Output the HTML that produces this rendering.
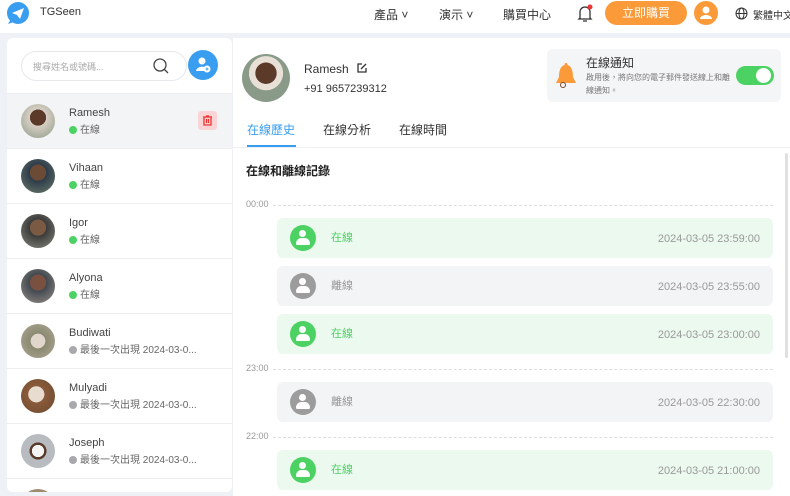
<!DOCTYPE html><html><head><meta charset="utf-8"><style>
*{box-sizing:border-box;margin:0;padding:0}
html,body{overflow:hidden}
body{width:790px;height:496px;background:#eef1f5;font-family:"Liberation Sans","Noto Sans CJK TC",sans-serif;position:relative;color:#333}
.a{position:absolute}
.hdr{left:0;top:0;width:790px;height:33px;background:#fff}
.nav{font-size:12px;color:#333;top:6px}
.side{left:7px;top:38px;width:225px;height:454px;background:#fff;border-radius:6px;overflow:hidden}
.main{left:233px;top:38px;width:557px;height:458px;background:#fff;overflow:hidden}
.row{position:absolute;left:0;width:225px;height:55px;border-top:1px solid #eceef1}
.av{position:absolute;width:34px;height:34px;border-radius:50%;left:14px;top:10px}
.nm{position:absolute;left:62px;top:13px;font-size:11px;color:#444}
.st{position:absolute;left:62px;top:27px;font-size:10px;color:#666;white-space:nowrap}
.dot{display:inline-block;width:8px;height:8px;border-radius:50%;margin-right:3px;vertical-align:-1px}
.card{position:absolute;left:44px;width:496px;height:40px;border-radius:6px}
.ic{position:absolute;left:13px;top:7px;width:26px;height:26px;border-radius:50%}
.ct{position:absolute;left:54px;top:0;line-height:40px;font-size:11px}
.dt{position:absolute;right:13px;top:1px;line-height:40px;font-size:11px;color:#999}
.tl{position:absolute;left:13px;font-size:9px;color:#999}
.dash{position:absolute;left:40px;width:500px;border-top:1px dashed #ddd}
.ic::after{content:"";position:absolute;left:9px;top:5px;width:7px;height:7px;border-radius:50%;background:#fff}
.ic::before{content:"";position:absolute;left:6px;top:13px;width:14px;height:7px;border-radius:7px 7px 2px 2px;background:#fff}
</style></head><body>
<div class="a hdr"></div>
<svg class="a" style="left:6px;top:2px" width="24" height="24" viewBox="0 0 24 24"><circle cx="12" cy="11" r="11" fill="#3a9ef0"/><path d="M2 22 L5 17 L8 20Z" fill="#3a9ef0"/><path d="M6 11 L18 6 L14 17 L11 13Z" fill="#fff"/></svg>
<div class="a" style="left:40px;top:6px;font-size:11px;color:#333">TGSeen</div>
<div class="a nav" style="left:374px">產品 ˅</div>
<div class="a nav" style="left:439px">演示 ˅</div>
<div class="a nav" style="left:503px">購買中心</div>
<svg class="a" style="left:576px;top:4px" width="18" height="20" viewBox="0 0 18 20"><path d="M4 14 V8 a5 5 0 0 1 10 0 V14 L15 15 H3Z M7 17 h4" fill="none" stroke="#333" stroke-width="1.3"/><circle cx="14" cy="3" r="2.5" fill="#e33"/></svg>
<div class="a" style="left:605px;top:1px;width:82px;height:24px;border-radius:12px;background:#fb9a38;color:#fff;font-size:12px;text-align:center;line-height:24px">立即購買</div>
<div class="a" style="left:694px;top:1px;width:24px;height:24px;border-radius:50%;background:#fb9a38"><svg width="24" height="24"><circle cx="12" cy="9" r="3.5" fill="#fff"/><path d="M6 18 a6 4 0 0 1 12 0Z" fill="#fff"/></svg></div>
<svg class="a" style="left:735px;top:7px" width="13" height="13" viewBox="0 0 13 13" fill="none" stroke="#333" stroke-width="1"><circle cx="6.5" cy="6.5" r="5.5"/><ellipse cx="6.5" cy="6.5" rx="2.5" ry="5.5"/><path d="M1 6.5h11"/></svg>
<div class="a" style="left:753px;top:7px;font-size:10px;white-space:nowrap">繁體中文</div>

<div class="a side">
 <div class="a" style="left:14px;top:13px;width:166px;height:30px;border:1px solid #e6e8eb;border-radius:15px;font-size:9px;color:#aaa;padding:8px 11px">搜尋姓名或號碼...</div>
 <svg class="a" style="left:145px;top:19px" width="18" height="18"><circle cx="8" cy="8" r="6" fill="none" stroke="#444" stroke-width="1.3"/><path d="M12.5 12.5 L16 16" stroke="#444" stroke-width="1.3"/></svg>
 <div class="a" style="left:181px;top:12px;width:30px;height:30px;border-radius:50%;background:#3a9ef0"><svg width="30" height="30"><circle cx="14" cy="11" r="3.5" fill="#fff"/><path d="M8 21 a6 5 0 0 1 10 -3 v3Z" fill="#fff"/><circle cx="19" cy="19" r="3.5" fill="#fff"/><path d="M17.5 19h3M19 17.5v3" stroke="#3a9ef0"/></svg></div>
 <div class="row" style="top:55px;background:#f3f4f6"><div class="av" style="background:radial-gradient(circle at 50% 40%,#5b3a2a 0 30%,#d9cfc4 31%,#8a9a88)"></div><div class="nm">Ramesh</div><div class="st"><span class="dot" style="background:#4cd263"></span>在線</div>
  <div class="a" style="left:191px;top:17px;width:19px;height:19px;background:#fbd5d5;border-radius:3px"><svg width="19" height="19"><path d="M5 6h9M8 5h3M6 6v8h7V6M8.5 8v4M10.5 8v4" fill="none" stroke="#e33" stroke-width="1.3"/></svg></div></div>
 <div class="row" style="top:110px"><div class="av" style="background:radial-gradient(circle at 50% 40%,#6b4a36 0 30%,#2d3b4a 31%,#6b7c6a)"></div><div class="nm">Vihaan</div><div class="st"><span class="dot" style="background:#4cd263"></span>在線</div></div>
 <div class="row" style="top:165px"><div class="av" style="background:radial-gradient(circle at 50% 40%,#7b5a44 0 30%,#3a3a3a 31%,#8a8a80)"></div><div class="nm">Igor</div><div class="st"><span class="dot" style="background:#4cd263"></span>在線</div></div>
 <div class="row" style="top:220px"><div class="av" style="background:radial-gradient(circle at 50% 40%,#7a5040 0 30%,#404850 31%,#9a9088)"></div><div class="nm">Alyona</div><div class="st"><span class="dot" style="background:#4cd263"></span>在線</div></div>
 <div class="row" style="top:275px"><div class="av" style="background:radial-gradient(circle at 50% 50%,#e0d6cc 0 30%,#8a8a70 31%,#b0a898)"></div><div class="nm">Budiwati</div><div class="st"><span class="dot" style="background:#a8a8ad"></span>最後一次出現 2024-03-0...</div></div>
 <div class="row" style="top:330px"><div class="av" style="background:radial-gradient(circle at 45% 45%,#e8dcd0 0 30%,#8a5a3a 31%,#6a4a30)"></div><div class="nm">Mulyadi</div><div class="st"><span class="dot" style="background:#a8a8ad"></span>最後一次出現 2024-03-0...</div></div>
 <div class="row" style="top:385px"><div class="av" style="background:radial-gradient(circle at 50% 50%,#f4f4f4 0 25%,#5a3a2a 26% 35%,#b8bcc0 36%)"></div><div class="nm">Joseph</div><div class="st"><span class="dot" style="background:#a8a8ad"></span>最後一次出現 2024-03-0...</div></div>
 <div class="row" style="top:440px"><div class="av" style="background:#a08a70"></div></div>
</div>

<div class="a main">
 <div class="a" style="left:9px;top:16px;width:48px;height:48px;border-radius:50%;background:radial-gradient(circle at 50% 40%,#5b3a2a 0 28%,#e8e0d6 29% 45%,#8a9a88 46%)"></div>
 <div class="a" style="left:71px;top:24px;font-size:12px;color:#333">Ramesh <svg width="12" height="12" style="vertical-align:-1px;margin-left:4px"><path d="M6 2H2v8h8V6M5 7l5-5" fill="none" stroke="#333" stroke-width="1.3"/></svg></div>
 <div class="a" style="left:71px;top:45px;font-size:11px;color:#333">+91 9657239312</div>
 <div class="a" style="left:314px;top:11px;width:234px;height:53px;background:#f4f5f7;border-radius:6px">
  <svg class="a" style="left:7px;top:13px" width="24" height="28" viewBox="0 0 24 28"><path d="M12 3 C6 3 5 10 5 15 L2 21 H22 L19 15 C19 10 18 3 12 3Z" fill="#fb9a38"/><circle cx="12" cy="2.5" r="1.5" fill="#fb9a38"/><circle cx="9" cy="23" r="2.5" fill="none" stroke="#7a4a2a"/></svg>
  <div class="a" style="left:39px;top:5px;font-size:12px;color:#333">在線通知</div>
  <div class="a" style="left:39px;top:22px;font-size:8px;color:#777;width:150px;line-height:13px">啟用後，將向您的電子郵件發送線上和離線通知。</div>
  <div class="a" style="left:189px;top:17px;width:38px;height:19px;border-radius:10px;background:#4cd263"><div class="a" style="left:20px;top:2px;width:15px;height:15px;border-radius:50%;background:#fff"></div></div>
 </div>
 <div class="a" style="left:14px;top:83px;font-size:12px;color:#3a9ef0">在線歷史</div>
 <div class="a" style="left:90px;top:83px;font-size:12px;color:#333">在線分析</div>
 <div class="a" style="left:166px;top:83px;font-size:12px;color:#333">在線時間</div>
 <div class="a" style="left:14px;top:107px;width:49px;height:2px;background:#3a9ef0"></div>
 <div class="a" style="left:0;top:109px;width:557px;height:1px;background:#eceef1"></div>
 <div class="a" style="left:552px;top:115px;width:3px;height:205px;background:#e0e0e0;border-radius:2px"></div>
 <div class="a" style="left:13px;top:124px;font-size:12px;font-weight:bold;color:#222">在線和離線記錄</div>
 <div class="tl" style="top:161px">00:00</div><div class="dash" style="top:167px"></div>
 <div class="card" style="top:180px;background:#ebf9ee"><div class="ic" style="background:#4cd263"></div><div class="ct" style="color:#4cd263">在線</div><div class="dt">2024-03-05 23:59:00</div></div>
 <div class="card" style="top:228px;background:#f3f4f6"><div class="ic" style="background:#9c9c9c"></div><div class="ct" style="color:#999">離線</div><div class="dt">2024-03-05 23:55:00</div></div>
 <div class="card" style="top:276px;background:#ebf9ee"><div class="ic" style="background:#4cd263"></div><div class="ct" style="color:#4cd263">在線</div><div class="dt">2024-03-05 23:00:00</div></div>
 <div class="tl" style="top:325px">23:00</div><div class="dash" style="top:331px"></div>
 <div class="card" style="top:344px;background:#f3f4f6"><div class="ic" style="background:#9c9c9c"></div><div class="ct" style="color:#999">離線</div><div class="dt">2024-03-05 22:30:00</div></div>
 <div class="tl" style="top:393px">22:00</div><div class="dash" style="top:399px"></div>
 <div class="card" style="top:412px;background:#ebf9ee"><div class="ic" style="background:#4cd263"></div><div class="ct" style="color:#4cd263">在線</div><div class="dt">2024-03-05 21:00:00</div></div>
</div>
</body></html>
